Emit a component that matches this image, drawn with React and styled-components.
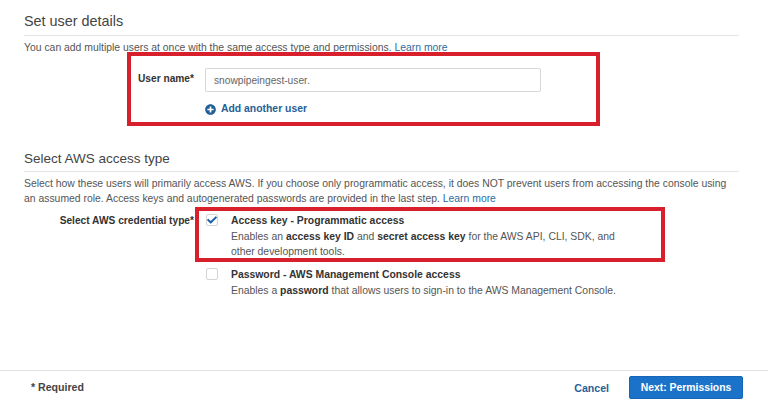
import React from 'react';
import styled, { createGlobalStyle } from 'styled-components';
import { FaCheck, FaPlusCircle } from 'react-icons/fa';

const GlobalStyle = createGlobalStyle`
    html, body {
        margin: 0;
        padding: 0;
        background: #fff;
    }
    body {
        font-family: "Liberation Sans", Arial, sans-serif;
        color: #444;
    }
`;

const Page = styled.div`
    position: relative;
    width: 768px;
    height: 401px;
    overflow: hidden;
    display: flex;
    flex-direction: column;
`;

const Main = styled.div`
    flex: 1;
    padding: 12px 29px 0 24px;
`;

const Section = styled.section`
    margin-bottom: ${(props) => props.$gap || 0}px;
`;

const Heading = styled.h2`
    margin: 0;
    height: ${(props) => props.$height}px;
    line-height: 18px;
    font-size: ${(props) => props.$size}px;
    font-weight: 400;
    color: #444;
    border-bottom: 1px solid #e4e4e4;
`;

const Help = styled.p`
    margin: 4px 0 0;
    max-width: 710px;
    font-size: 10.4px;
    line-height: 15px;
    color: #555;
`;

const Link = styled.a`
    color: #2b6ca3;
`;

const FormRow = styled.div`
    display: grid;
    grid-template-columns: 170px 1fr;
    column-gap: 12px;
    margin-top: ${(props) => props.$top || 0}px;
`;

const Label = styled.label`
    font-size: 10.2px;
    font-weight: 700;
    color: #333;
    text-align: right;
    line-height: 15px;
    padding-top: ${(props) => props.$top || 0}px;
`;

const Fields = styled.div`
    display: flex;
    flex-direction: column;
`;

const UserFields = styled(Fields)`
    margin-left: -1px;
`;

const TextInput = styled.input`
    box-sizing: border-box;
    width: 336px;
    height: 24px;
    padding: 0 8px;
    border: 1px solid #d8d8d8;
    border-radius: 2px;
    font-family: inherit;
    font-size: 10.2px;
    color: #666;
    outline: none;
`;

const AddUser = styled.a`
    display: flex;
    align-items: center;
    gap: 5px;
    margin-top: 10px;
    font-size: 10.4px;
    line-height: 14px;
    font-weight: 700;
    color: #1f5f96;
    svg {
        width: 11px;
        height: 11px;
    }
`;

const Option = styled.div`
    display: flex;
    gap: 13px;
    margin-bottom: ${(props) => props.$gap || 0}px;
`;

const Box = styled.span`
    box-sizing: border-box;
    flex: none;
    width: 12px;
    height: 12px;
    margin-top: 1px;
    display: flex;
    align-items: center;
    justify-content: center;
    border: 1px solid #d5d5d5;
    border-radius: 2px;
    background: #fff;
    color: #1b5fa8;
    svg {
        width: 10px;
        height: 10px;
    }
`;

const OptionTitle = styled.div`
    font-size: 10.4px;
    line-height: 15px;
    font-weight: 700;
    color: #333;
`;

const OptionText = styled.div`
    width: 400px;
    margin-top: 1px;
    font-size: 10.4px;
    line-height: 15px;
    color: #555;
    b {
        color: #333;
    }
`;

const Footer = styled.footer`
    box-sizing: border-box;
    flex: none;
    height: 31px;
    padding: 5px 25px 0 31px;
    border-top: 1px solid #e2e2e2;
    display: flex;
    align-items: flex-start;
    justify-content: space-between;
`;

const Required = styled.span`
    font-size: 10.6px;
    line-height: 22px;
    font-weight: 700;
    color: #444;
`;

const Actions = styled.div`
    display: flex;
    align-items: center;
    gap: 20px;
`;

const Cancel = styled.a`
    font-size: 10.6px;
    font-weight: 700;
    color: #1f5f96;
`;

const Primary = styled.button`
    box-sizing: border-box;
    width: 114px;
    height: 23px;
    padding: 0;
    border: 1px solid #1566b7;
    border-radius: 2px;
    background: #1a73c9;
    color: #fff;
    font-family: inherit;
    font-size: 10.4px;
    font-weight: 700;
`;

// red annotation boxes drawn over the form
const Callout = styled.div`
    position: absolute;
    box-sizing: border-box;
    left: ${(props) => props.$x}px;
    top: ${(props) => props.$y}px;
    width: ${(props) => props.$w}px;
    height: ${(props) => props.$h}px;
    border: 4px solid #d8202c;
    pointer-events: none;
`;

function App() {
    return (
        <Page>
            <GlobalStyle />
            <Main>
                <Section $gap={34}>
                    <Heading $size={14.4} $height={23}>Set user details</Heading>
                    <Help>
                        You can add multiple users at once with the same access type and permissions.{' '}
                        <Link>Learn more</Link>
                    </Help>
                    <FormRow $top={13}>
                        <Label $top={3}>User name*</Label>
                        <UserFields>
                            <TextInput readOnly value="snowpipeingest-user." />
                            <AddUser>
                                <FaPlusCircle />
                                Add another user
                            </AddUser>
                        </UserFields>
                    </FormRow>
                </Section>
                <Section>
                    <Heading $size={13.5} $height={21}>Select AWS access type</Heading>
                    <Help>
                        Select how these users will primarily access AWS. If you choose only programmatic access, it does NOT prevent users from accessing the console using an assumed role. Access keys and autogenerated passwords are provided in the last step.{' '}
                        <Link>Learn more</Link>
                    </Help>
                    <FormRow $top={7}>
                        <Label>Select AWS credential type*</Label>
                        <Fields>
                            <Option $gap={8}>
                                <Box><FaCheck /></Box>
                                <div>
                                    <OptionTitle>Access key - Programmatic access</OptionTitle>
                                    <OptionText>
                                        Enables an <b>access key ID</b> and <b>secret access key</b> for the AWS API, CLI, SDK, and other development tools.
                                    </OptionText>
                                </div>
                            </Option>
                            <Option>
                                <Box />
                                <div>
                                    <OptionTitle>Password - AWS Management Console access</OptionTitle>
                                    <OptionText>
                                        Enables a <b>password</b> that allows users to sign-in to the AWS Management Console.
                                    </OptionText>
                                </div>
                            </Option>
                        </Fields>
                    </FormRow>
                </Section>
            </Main>
            <Footer>
                <Required>* Required</Required>
                <Actions>
                    <Cancel>Cancel</Cancel>
                    <Primary>Next: Permissions</Primary>
                </Actions>
            </Footer>
            <Callout $x={127} $y={52} $w={473} $h={74} />
            <Callout $x={195} $y={207} $w={470} $h={55} />
        </Page>
    );
}

export default App;
